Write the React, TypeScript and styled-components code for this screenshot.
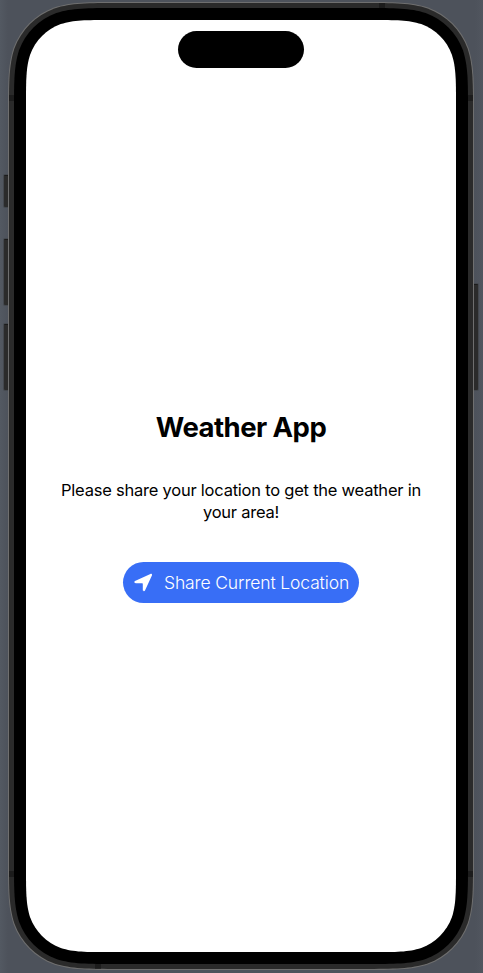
import React from "react";
import styled, { createGlobalStyle } from "styled-components";

const GlobalStyle = createGlobalStyle`
  body {
    margin: 0;
    background: #50555e;
    font-family: Inter, "Liberation Sans", sans-serif;
  }
`;

/* Outline of a rounded rectangle with continuous-curvature corners. */
const smoothRect = (w: number, h: number, r: number) => {
  const a = 1.5287 * r;
  const b = 1.0885 * r;
  const c = 0.8684 * r;
  const d = 0.6315 * r;
  const e = 0.0749 * r;
  const f = 0.3728 * r;
  const g = 0.1691 * r;
  return [
    `M${a} 0H${w - a}`,
    `C${w - b} 0 ${w - c} 0 ${w - d} ${e}`,
    `C${w - f} ${g} ${w - g} ${f} ${w - e} ${d}`,
    `C${w} ${c} ${w} ${b} ${w} ${a}`,
    `V${h - a}`,
    `C${w} ${h - b} ${w} ${h - c} ${w - e} ${h - d}`,
    `C${w - g} ${h - f} ${w - f} ${h - g} ${w - d} ${h - e}`,
    `C${w - c} ${h} ${w - b} ${h} ${w - a} ${h}`,
    `H${a}`,
    `C${b} ${h} ${c} ${h} ${d} ${h - e}`,
    `C${f} ${h - g} ${g} ${h - f} ${e} ${h - d}`,
    `C0 ${h - c} 0 ${h - b} 0 ${h - a}`,
    `V${a}`,
    `C0 ${b} 0 ${c} ${e} ${d}`,
    `C${g} ${f} ${f} ${g} ${d} ${e}`,
    `C${c} 0 ${b} 0 ${a} 0Z`,
  ].join("");
};

const Stage = styled.main`
  display: flex;
  align-items: flex-start;
  box-sizing: border-box;
  width: 483px;
  height: 973px;
  padding: 2px 5px 3px 4px;
  overflow: hidden;
  background: linear-gradient(90deg, #535962, #4d525b 8px, #4d525b 475px, #51565f);
`;

const KeyColumn = styled.div<{ $start: number }>`
  display: flex;
  flex-direction: column;
  flex: 0 0 4px;
  padding-top: ${(p) => p.$start}px;
`;

const SideKey = styled.span<{ $side: "left" | "right"; $size: number; $gap?: number }>`
  box-sizing: border-box;
  height: ${(p) => p.$size}px;
  margin-bottom: ${(p) => p.$gap ?? 0}px;
  border-top: 1px solid #1c1c1c;
  border-radius: ${(p) => (p.$side === "left" ? "1px 0 0 1px" : "0 1px 1px 0")};
  background: #2b2b2b;
  box-shadow: 0 0 0 1px #44484e;
`;

const Shell = styled.div<{ $w: number; $h: number; $r: number; $fill: string }>`
  flex: none;
  box-sizing: border-box;
  width: ${(p) => p.$w}px;
  height: ${(p) => p.$h}px;
  background: ${(p) => p.$fill};
  clip-path: path("${(p) => smoothRect(p.$w, p.$h, p.$r)}");
`;

const Rim = styled(Shell)`
  padding: 1px;
`;

const Frame = styled(Shell)`
  display: grid;
  grid-template: 5px 956px 5px / 5px 454px 5px;
`;

const FrameEdge = styled.div<{ $vertical?: boolean; $inset: string }>`
  display: flex;
  flex-direction: ${(p) => (p.$vertical ? "column" : "row")};
  justify-content: space-between;
  padding: ${(p) => p.$inset};
`;

const AntennaBand = styled.span`
  flex: 0 0 6px;
  background: #1c1c1c;
`;

const Bezel = styled(Shell)`
  padding: 12px;
`;

const Screen = styled(Shell)`
  display: flex;
  flex-direction: column;
  align-items: center;
  padding-top: 11px;
`;

const Island = styled.div`
  flex: none;
  width: 126px;
  height: 37px;
  border-radius: 19px;
  background: #000;
`;

const Content = styled.section`
  display: flex;
  flex: 1;
  flex-direction: column;
  align-items: center;
  justify-content: center;
  padding-bottom: 8px;
`;

const Title = styled.h1`
  margin: 0 0 34px;
  font-size: 27.5px;
  font-weight: 700;
  line-height: 36px;
  letter-spacing: -0.54px;
  color: #000;
`;

const Message = styled.p`
  width: 390px;
  margin: 0 0 39px;
  font-size: 16.5px;
  line-height: 22px;
  letter-spacing: -0.23px;
  text-align: center;
  color: #000;
`;

const ShareButton = styled.button`
  display: flex;
  align-items: center;
  box-sizing: border-box;
  width: 236px;
  height: 41px;
  padding: 0 0 0 11px;
  gap: 11px;
  border: 0;
  border-radius: 21px;
  background: #386ef6;
  color: #fff;
  font: 350 17.5px Inter, "Liberation Sans", sans-serif;
  letter-spacing: -0.13px;
  white-space: nowrap;
`;

const LocationArrow = () => (
  <svg width="19" height="19" viewBox="0 0 19 19" aria-hidden="true">
    <path
      d="M1 8.1 16.4 1C17.5.5 18.4 1.4 17.9 2.5L11 17.4C10.4 18.7 8.8 18.3 8.8 17V10.8Q8.8 10.2 8.2 10.2H1.8C.3 10.2-.2 8.7 1 8.1Z"
      fill="currentColor"
    />
  </svg>
);

export default function App() {
  return (
    <>
      <GlobalStyle />
      <Stage>
        <KeyColumn $start={173}>
          <SideKey $side="left" $size={32} $gap={32} />
          <SideKey $side="left" $size={66} $gap={19} />
          <SideKey $side="left" $size={66} />
        </KeyColumn>
        <Rim $w={466} $h={968} $r={73} $fill="#6f6f6f">
          <Frame $w={464} $h={966} $r={72} $fill="#2a2a2a">
            <span />
            <FrameEdge $inset="0 0 0 365px">
              <AntennaBand />
            </FrameEdge>
            <span />
            <FrameEdge $vertical $inset="87px 0">
              <AntennaBand />
              <AntennaBand />
            </FrameEdge>
            <Bezel $w={454} $h={956} $r={67} $fill="#000">
              <Screen $w={430} $h={932} $r={55} $fill="#fff">
                <Island />
                <Content>
                  <Title>Weather App</Title>
                  <Message>
                    Please share your location to get the weather in
                    <br />
                    your area!
                  </Message>
                  <ShareButton type="button">
                    <LocationArrow />
                    Share Current Location
                  </ShareButton>
                </Content>
              </Screen>
            </Bezel>
            <FrameEdge $vertical $inset="87px 0">
              <AntennaBand />
              <AntennaBand />
            </FrameEdge>
            <span />
            <FrameEdge $inset="0 0 0 81px">
              <AntennaBand />
            </FrameEdge>
            <span />
          </Frame>
        </Rim>
        <KeyColumn $start={282}>
          <SideKey $side="right" $size={106} />
        </KeyColumn>
      </Stage>
    </>
  );
}
